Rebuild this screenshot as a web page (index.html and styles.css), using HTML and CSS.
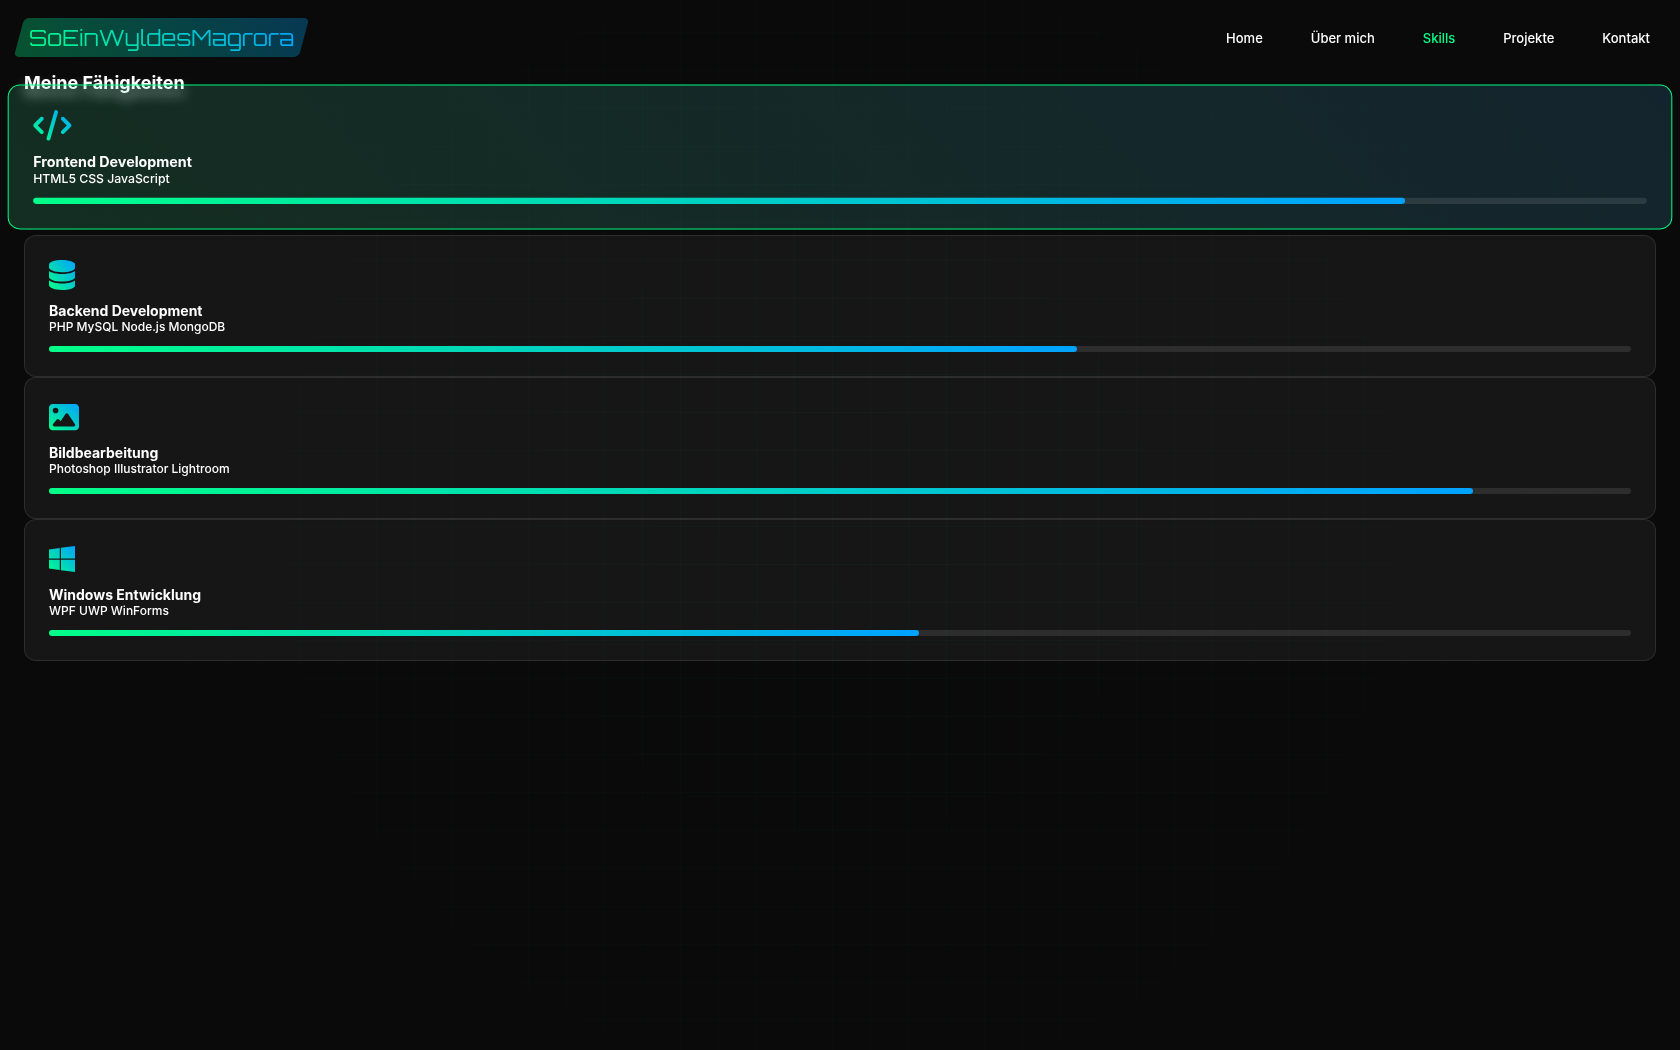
FILE: index.html
```html
<!DOCTYPE html>
<html lang="de">
<head>
<meta charset="utf-8">
<meta name="viewport" content="width=device-width, initial-scale=1">
<title>SoEinWyldesMagrora</title>
<link rel="stylesheet" href="styles.css">
</head>
<body>
<svg class="defs" aria-hidden="true">
  <defs>
    <linearGradient id="accent" x1="0" y1="1" x2="1" y2="0">
      <stop offset="0" stop-color="#00ff88"/>
      <stop offset="1" stop-color="#00a2ff"/>
    </linearGradient>
  </defs>
</svg>
<header class="header">
  <a class="logo" href="#home"><span class="logo-text">SoEinWyldesMagrora</span></a>
  <nav class="nav">
    <a href="#home">Home</a>
    <a href="#about">Über mich</a>
    <a class="active" href="#skills">Skills</a>
    <a href="#projects">Projekte</a>
    <a href="#contact">Kontakt</a>
  </nav>
</header>
<main class="skills" id="skills">
  <h2 class="section-title">Meine Fähigkeiten</h2>
  <article class="card card-active">
    <svg class="icon" viewBox="0 0 640 512" aria-hidden="true"><path d="M392.8 1.2c-17-4.9-34.7 5-39.6 22l-128 448c-4.9 17 5 34.7 22 39.6s34.7-5 39.6-22l128-448c4.9-17-5-34.7-22-39.6zm80.6 120.1c-12.5 12.5-12.5 32.8 0 45.3L562.7 256l-89.4 89.4c-12.5 12.5-12.5 32.8 0 45.3s32.8 12.5 45.3 0l112-112c12.5-12.5 12.5-32.8 0-45.3l-112-112c-12.5-12.5-32.8-12.5-45.3 0zm-306.7 0c-12.5-12.5-32.8-12.5-45.3 0l-112 112c-12.5 12.5-12.5 32.8 0 45.3l112 112c12.5 12.5 32.8 12.5 45.3 0s12.5-32.8 0-45.3L77.3 256l89.4-89.4c12.5-12.5 12.5-32.8 0-45.3z"/></svg>
    <h3>Frontend Development</h3>
    <p>HTML5 CSS JavaScript</p>
    <div class="bar"><div class="fill" style="width: 85%"></div></div>
  </article>
  <article class="card">
    <svg class="icon" viewBox="0 0 448 512" aria-hidden="true"><path d="M448 80v48c0 44.2-100.3 80-224 80S0 172.2 0 128V80C0 35.8 100.3 0 224 0S448 35.8 448 80zM393.2 214.7c20.8-7.4 39.9-16.9 54.8-28.6V288c0 44.2-100.3 80-224 80S0 332.2 0 288V186.1c14.9 11.8 34 21.2 54.8 28.6C99.7 230.7 159.5 240 224 240s124.3-9.3 169.2-25.3zM0 346.1c14.9 11.8 34 21.2 54.8 28.6C99.7 390.7 159.5 400 224 400s124.3-9.3 169.2-25.3c20.8-7.4 39.9-16.9 54.8-28.6V432c0 44.2-100.3 80-224 80S0 476.2 0 432V346.1z"/></svg>
    <h3>Backend Development</h3>
    <p>PHP MySQL Node.js MongoDB</p>
    <div class="bar"><div class="fill" style="width: 65%"></div></div>
  </article>
  <article class="card">
    <svg class="icon" viewBox="0 0 512 512" aria-hidden="true"><path d="M0 96C0 60.7 28.7 32 64 32H448c35.3 0 64 28.7 64 64V416c0 35.3-28.7 64-64 64H64c-35.3 0-64-28.7-64-64V96zM323.8 202.5c-4.5-6.6-11.9-10.5-19.8-10.5s-15.4 3.9-19.8 10.5l-87 127.6L170.7 297c-4.6-5.7-11.5-9-18.7-9s-14.2 3.3-18.7 9l-64 80c-5.8 7.2-6.9 17.1-2.9 25.4s12.4 13.6 21.6 13.6h96 32H424c8.9 0 17.1-4.9 21.2-12.8s3.6-17.4-1.4-24.7l-120-176zM112 192a48 48 0 1 0 0-96 48 48 0 1 0 0 96z"/></svg>
    <h3>Bildbearbeitung</h3>
    <p>Photoshop Illustrator Lightroom</p>
    <div class="bar"><div class="fill" style="width: 90%"></div></div>
  </article>
  <article class="card">
    <svg class="icon" viewBox="0 0 448 512" aria-hidden="true"><path d="M0 93.7l183.6-25.3v177.4H0V93.7zm0 324.6l183.6 25.3V268.4H0v149.9zm203.8 28L448 480V268.4H203.8v177.9zm0-380.6v180.1H448V32L203.8 65.7z"/></svg>
    <h3>Windows Entwicklung</h3>
    <p>WPF UWP WinForms</p>
    <div class="bar"><div class="fill" style="width: 55%"></div></div>
  </article>
</main>
</body>
</html>
```
FILE: styles.css
```css
* {
  box-sizing: border-box;
  margin: 0;
  padding: 0;
}

body {
  min-height: 100vh;
  background: #0a0a0a;
  color: #fff;
  font-family: Inter, sans-serif;
}

/* faint grid, fading out towards the window edges */
body::before {
  content: "";
  position: fixed;
  inset: 0;
  z-index: -1;
  background:
    linear-gradient(90deg, rgba(0, 255, 136, 0.03) 1px, transparent 1px) 34px 0 / 38px 38px,
    linear-gradient(rgba(0, 255, 136, 0.03) 1px, transparent 1px) 0 32px / 38px 38px;
  -webkit-mask-image: radial-gradient(circle, #000, transparent 100%);
  mask-image: radial-gradient(circle, #000, transparent 100%);
}

.defs {
  position: absolute;
  width: 0;
  height: 0;
}

.header {
  display: flex;
  align-items: center;
  justify-content: space-between;
  padding: 18px 30px 15px 19px;
}

.logo {
  position: relative;
  padding: 1px 10px 0;
  font-family: Orbitron, "DejaVu Sans", sans-serif;
  font-size: 22px;
  font-weight: 400;
  line-height: 38px;
  text-decoration: none;
}

.logo::before {
  content: "";
  position: absolute;
  inset: 0;
  z-index: -1;
  border-radius: 5px;
  background: linear-gradient(45deg, #00ff88, #00a2ff);
  opacity: 0.3;
  transform: skewX(-15deg);
}

.logo-text {
  background: linear-gradient(45deg, #00ff88, #00a2ff);
  -webkit-background-clip: text;
  background-clip: text;
  color: transparent;
}

.nav {
  display: flex;
  gap: 48px;
  font-size: 13px;
  font-weight: 500;
}

.nav a {
  color: #fff;
  text-decoration: none;
}

.nav .active {
  color: #00ff88;
}

.skills {
  padding: 0 24px;
}

.section-title {
  font-size: 18px;
  font-weight: 700;
  line-height: 21px;
  text-shadow: 0 8px 12px rgba(255, 255, 255, 0.5);
}

.card {
  padding: 24px;
  border: 1px solid rgba(255, 255, 255, 0.1);
  border-radius: 12px;
  background: rgba(255, 255, 255, 0.05);
}

.card-active {
  border-color: #00ff88;
  background:
    linear-gradient(45deg, rgba(0, 255, 136, 0.1), rgba(0, 162, 255, 0.1)),
    rgba(255, 255, 255, 0.05);
  transform: translateY(-7px) scale(1.02);
}

.icon {
  display: block;
  height: 30px;
  margin-bottom: 13px;
  fill: url(#accent);
}

.card h3 {
  font-size: 14px;
  font-weight: 700;
  line-height: 16px;
}

.card p {
  font-size: 12px;
  font-weight: 500;
  line-height: 16px;
}

.bar {
  height: 6px;
  margin-top: 11px;
  border-radius: 3px;
  background: rgba(255, 255, 255, 0.1);
}

.fill {
  height: 100%;
  border-radius: 3px;
  background: linear-gradient(90deg, #00ff88, #00a2ff);
}
```
